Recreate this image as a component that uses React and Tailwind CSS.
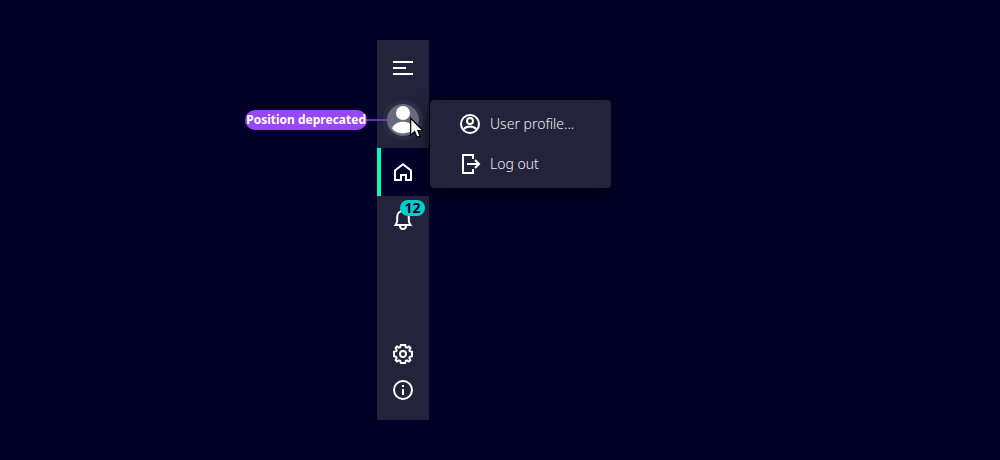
import React from "react";

const strokeProps = {
  viewBox: "0 0 24 24",
  fill: "none",
  stroke: "currentColor",
  strokeWidth: 2,
  "aria-hidden": true,
  className: "size-6 shrink-0",
};

function MenuIcon() {
  return (
    <svg {...strokeProps}>
      <path d="M2 6h20M2 12h13M2 18h20" />
    </svg>
  );
}

function HomeIcon() {
  return (
    <svg {...strokeProps}>
      <path d="M4 20V10.5L12 4.2L20 10.5V20H15V15H10V20Z" />
    </svg>
  );
}

function BellIcon() {
  return (
    <svg {...strokeProps}>
      <path d="M4.6 17C6 15.2 6.2 13.5 6.2 12V9C6.2 5.6 8.6 3 12 3S17.8 5.6 17.8 9V12C17.8 13.5 18 15.2 19.4 17Z" />
      <path d="M9 17.5C9 19.8 10.3 21 12 21S15 19.8 15 17.5" />
    </svg>
  );
}

function GearIcon() {
  return (
    <svg {...strokeProps}>
      <path d="M9.8 3H14.2L14.8 5.2L16 5.7L18 4.6L19.4 6L18.3 8L18.8 9.2L21 9.8V14.2L18.8 14.8L18.3 16L19.4 18L18 19.4L16 18.3L14.8 18.8L14.2 21H9.8L9.2 18.8L8 18.3L6 19.4L4.6 18L5.7 16L5.2 14.8L3 14.2V9.8L5.2 9.2L5.7 8L4.6 6L6 4.6L8 5.7L9.2 5.2Z" />
      <circle cx="12" cy="12" r="3" />
    </svg>
  );
}

function InfoIcon() {
  return (
    <svg {...strokeProps}>
      <circle cx="12" cy="12" r="9" />
      <path d="M12 7v2M12 11v6" />
    </svg>
  );
}

function ProfileIcon() {
  return (
    <svg {...strokeProps}>
      <circle cx="12" cy="12" r="9" />
      <circle cx="12" cy="9" r="3" />
      <path d="M5.5 17.5C7 15.6 9.3 14.6 12 14.6S17 15.6 18.5 17.5" />
    </svg>
  );
}

function LogoutIcon() {
  return (
    <svg {...strokeProps}>
      <path d="M15 7V3H5V21H15V17M9 12H21M17 8L21 12L17 16" />
    </svg>
  );
}

function AvatarIcon() {
  return (
    <svg viewBox="0 0 32 32" aria-hidden="true" className="size-8">
      <circle cx="16" cy="16" r="16" fill="#69697c" />
      <circle cx="16" cy="9" r="7" fill="#fff" />
      <path d="M5 24.5C6.5 20.2 10.8 17.8 16 17.8S25.5 20.2 27 24.5C24.2 27.8 20.3 29.4 16 29.4S7.8 27.8 5 24.5Z" fill="#fff" />
    </svg>
  );
}

function Cursor() {
  return (
    <svg viewBox="0 0 16 24" aria-hidden="true" className="pointer-events-none absolute top-5 left-8 h-6 w-4">
      <path
        d="M1.7 2.3V19.1L5.6 15.6L8.1 21.4L11.2 20.1L8.8 14.5H13.8Z"
        fill="#fff"
        stroke="#000"
        strokeWidth="1.2"
      />
    </svg>
  );
}

export default function App() {
  return (
    <main className="grid min-h-screen grid-cols-[377fr_52px_571fr] bg-[#000028] py-10 font-['Noto_Sans',sans-serif] text-white">
      <div className="flex items-start justify-end pt-[70px]">
        <p className="flex h-5 items-center rounded-full bg-[#9747ff] px-px text-xs font-bold whitespace-nowrap">
          Position deprecated
        </p>
        <span className="mt-[9px] h-0.5 w-2.5 shrink-0 bg-[#5f31b0]" />
      </div>

      <nav aria-label="Main" className="flex flex-col bg-[#23233c] pb-3">
        <button type="button" aria-label="Expand menu" className="flex h-14 items-center justify-center">
          <MenuIcon />
        </button>
        <div className="relative h-[52px]">
          <button type="button" aria-label="User" className="flex h-12 w-full items-center justify-center">
            <span className="rounded-full bg-[#2b2b43] p-1">
              <AvatarIcon />
            </span>
          </button>
          <span className="absolute top-[23px] left-0 h-0.5 w-2.5 bg-[#6b37b8]" />
          <Cursor />
        </div>
        <a
          href="#home"
          aria-label="Home"
          aria-current="page"
          className="flex h-12 items-center justify-center border-l-4 border-[#00ffb9] bg-[#000028] pr-1"
        >
          <HomeIcon />
        </a>
        <button type="button" aria-label="Notifications" className="relative flex h-12 items-center justify-center">
          <BellIcon />
          <span className="absolute top-1 right-1 flex h-4 w-[25px] items-center justify-center rounded-full bg-[#00cccc] text-sm font-bold text-[#000028]">
            12
          </span>
        </button>
        <div className="mt-auto flex flex-col">
          <button type="button" aria-label="Settings" className="flex h-9 items-center justify-center">
            <GearIcon />
          </button>
          <button type="button" aria-label="About" className="flex h-9 items-center justify-center">
            <InfoIcon />
          </button>
        </div>
      </nav>

      <div className="pt-[60px] pl-px">
        <div role="menu" className="w-[181px] rounded bg-[#23233c] py-1 font-['Noto_Sans',sans-serif] text-sm font-light text-[#f0f0f4] shadow-[0_8px_18px_rgba(0,0,0,0.6),0_0_4px_rgba(0,0,0,0.6)]">
          <button type="button" role="menuitem" className="flex h-10 w-full items-center gap-2 pl-7">
            <span className="text-white"><ProfileIcon /></span>
            User profile...
          </button>
          <button type="button" role="menuitem" className="flex h-10 w-full items-center gap-2 pl-7">
            <span className="text-white"><LogoutIcon /></span>
            Log out
          </button>
        </div>
      </div>
    </main>
  );
}
